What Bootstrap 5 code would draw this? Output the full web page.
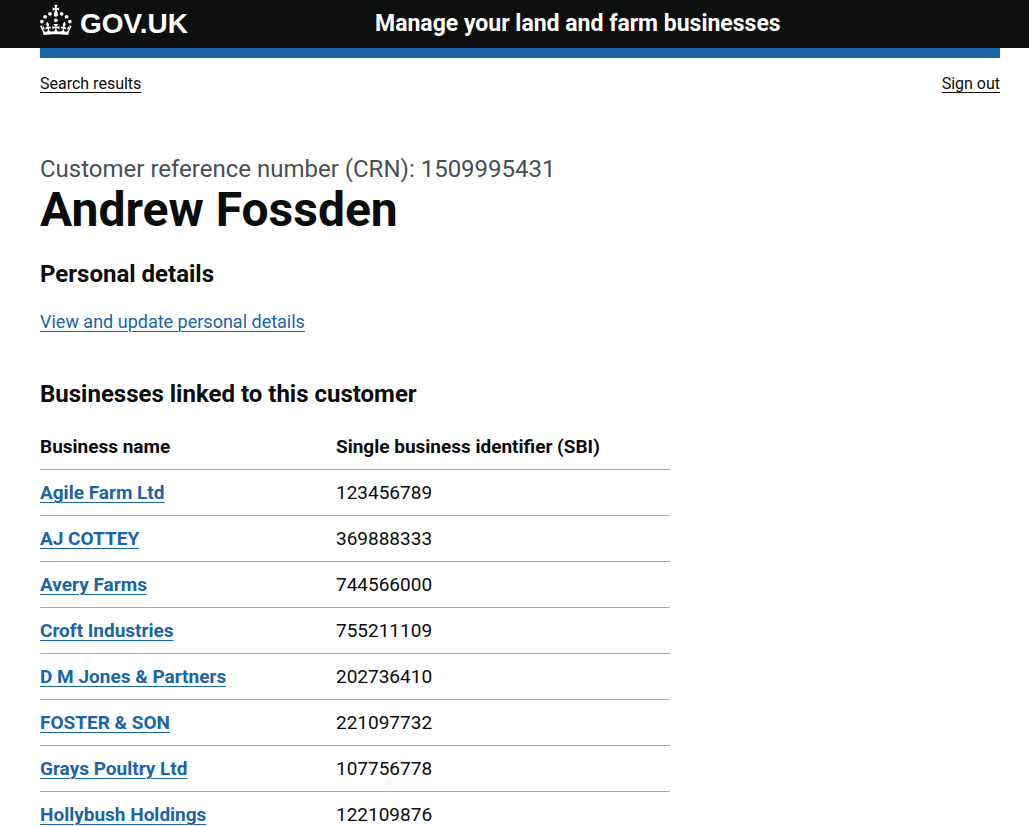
<!DOCTYPE html>
<html lang="en">
<head>
<meta charset="utf-8">
<meta name="viewport" content="width=device-width, initial-scale=1">
<title>Andrew Fossden - Manage your land and farm businesses</title>
<link href="https://cdn.jsdelivr.net/npm/bootstrap@5.3.0/dist/css/bootstrap.min.css" rel="stylesheet">
<style>
body { font: 400 19px/25px Roboto, "Liberation Sans", sans-serif; color: #0b0c0c; background: #fff; }
.page-width { padding: 0 29px 0 40px; }
.site-header { background: #0e100f; }
.site-header a { color: #fff; text-decoration: none; }
.header-row { min-height: 48px; }
.brand-col { width: 335px; }
.brand-text { font-family: "Liberation Sans", sans-serif; font-size: 28px; line-height: 30px; font-weight: 700; }
.service-name { font-size: 23px; line-height: 30px; font-weight: 700; }
.accent { height: 10px; background: #1a65a6; }
.top-links { font-size: 16px; line-height: 20px; padding-top: 16px; }
a { color: #1a65a6; text-decoration: underline; text-decoration-thickness: 1px; text-underline-offset: 3px; }
.top-links a { color: #0b0c0c; }
main { padding-top: 60px; }
.caption-xl { font-size: 24px; line-height: 30px; color: #484f53; }
h1 { font-size: 48px; line-height: 52px; font-weight: 700; margin-bottom: 23px; }
h2 { font-size: 24px; line-height: 30px; font-weight: 700; margin-bottom: 20px; }
.intro-link { font-size: 18px; margin-bottom: 45px; }
.table-heading { margin-bottom: 15px; }
.business-list { width: 65.6%; min-width: 320px; border-collapse: collapse; }
.business-list th, .business-list td { padding: 10px 20px 10px 0; border-bottom: 1px solid #a5a8a9; width: 53%; }
.business-list th:first-child { width: 47%; }
.business-list th { font-weight: 700; }
</style>
</head>
<body>
<header class="site-header">
  <div class="page-width header-row d-flex align-items-center">
    <div class="brand-col flex-shrink-0">
      <a href="#" class="d-inline-flex align-items-center gap-2" aria-label="GOV.UK">
        <svg width="32" height="30" viewBox="0 0 64 60" fill="currentColor" aria-hidden="true" class="mb-2">
          <circle cx="20" cy="17.6" r="3.7"/><circle cx="10.2" cy="23.5" r="3.7"/><circle cx="3.7" cy="33.2" r="3.7"/><circle cx="31.7" cy="30.6" r="3.7"/><circle cx="43.3" cy="17.6" r="3.7"/><circle cx="53.2" cy="23.5" r="3.7"/><circle cx="59.7" cy="33.2" r="3.7"/>
          <path d="M33.1,9.8c.2-.1.3-.3.5-.5l4.6,2.4v-6.8l-4.6,1.5c-.1-.2-.3-.3-.5-.5l1.9-5.9h-6.7l1.9,5.9c-.2.1-.3.3-.5.5l-4.6-1.5v6.8l4.6-2.4c.1.2.3.3.5.5l-2.6,8c-.9,2.8,1.2,5.7,4.1,5.7h0c3,0,5.1-2.9,4.1-5.7l-2.6-8ZM37,37.9s-3.4,3.8-4.1,6.1c2.2,0,4.2-.5,6.4-2.8l-.7,8.5c-2-2.8-4.4-4.1-5.7-3.8.1,3.1.5,6.7,5.8,7.2,3.7.3,6.7-1.5,7-3.8.4-2.6-2-4.3-3.7-1.6-1.4-4.5,2.4-6.1,4.9-3.2-1.9-4.5-1.8-7.7,2.4-10.9,3,4,2.6,7.3-1.2,11.1,2.4-1.3,6.2,0,4,4.6-1.2-2.8-3.7-2.2-4.2.2-.3,1.7.7,3.7,3,4.2,1.9.3,4.7-.9,7-5.9-1.3,0-2.4.7-3.9,1.7l2.4-8c.6,2.3,1.4,3.7,2.2,4.5.6-1.6.5-2.8,0-5.3l5,1.8c-2.6,3.6-5.2,8.7-7.3,17.5-7.4-1.1-15.7-1.7-24.5-1.7h0c-8.8,0-17.1.6-24.5,1.7-2.1-8.9-4.7-13.9-7.3-17.5l5-1.8c-.5,2.5-.6,3.7,0,5.3.8-.8,1.6-2.3,2.2-4.5l2.4,8c-1.5-1-2.6-1.7-3.9-1.7,2.3,5,5.2,6.2,7,5.9,2.3-.4,3.3-2.4,3-4.2-.5-2.4-3-3.1-4.2-.2-2.2-4.6,1.6-6,4-4.6-3.7-3.7-4.2-7.1-1.2-11.1,4.2,3.2,4.3,6.4,2.4,10.9,2.5-2.8,6.3-1.3,4.9,3.2-1.8-2.7-4.1-1-3.7,1.6.3,2.3,3.3,4.1,7,3.8,5.4-.5,5.7-4.2,5.8-7.2-1.3-.2-3.7,1-5.7,3.8l-.7-8.5c2.2,2.3,4.2,2.7,6.4,2.8-.7-2.3-4.1-6.1-4.1-6.1h10.6Z"/>
        </svg>
        <span class="brand-text">GOV.UK</span>
      </a>
    </div>
    <a href="#" class="service-name">Manage your land and farm businesses</a>
  </div>
</header>
<div class="page-width">
  <div class="accent"></div>
  <nav class="top-links d-flex justify-content-between" aria-label="Account">
    <a href="#">Search results</a>
    <a href="#">Sign out</a>
  </nav>
  <main>
    <div class="caption-xl">Customer reference number (CRN): 1509995431</div>
    <h1>Andrew Fossden</h1>
    <h2>Personal details</h2>
    <p class="intro-link"><a href="#">View and update personal details</a></p>
    <h2 class="table-heading">Businesses linked to this customer</h2>
    <table class="business-list">
      <thead><tr><th scope="col">Business name</th><th scope="col">Single business identifier (SBI)</th></tr></thead>
      <tbody>
        <tr><th scope="row"><a href="#">Agile Farm Ltd</a></th><td>123456789</td></tr>
        <tr><th scope="row"><a href="#">AJ COTTEY</a></th><td>369888333</td></tr>
        <tr><th scope="row"><a href="#">Avery Farms</a></th><td>744566000</td></tr>
        <tr><th scope="row"><a href="#">Croft Industries</a></th><td>755211109</td></tr>
        <tr><th scope="row"><a href="#">D M Jones &amp; Partners</a></th><td>202736410</td></tr>
        <tr><th scope="row"><a href="#">FOSTER &amp; SON</a></th><td>221097732</td></tr>
        <tr><th scope="row"><a href="#">Grays Poultry Ltd</a></th><td>107756778</td></tr>
        <tr><th scope="row"><a href="#">Hollybush Holdings</a></th><td>122109876</td></tr>
      </tbody>
    </table>
  </main>
</div>
<script src="https://cdn.jsdelivr.net/npm/bootstrap@5.3.0/dist/js/bootstrap.bundle.min.js"></script>
</body>
</html>
